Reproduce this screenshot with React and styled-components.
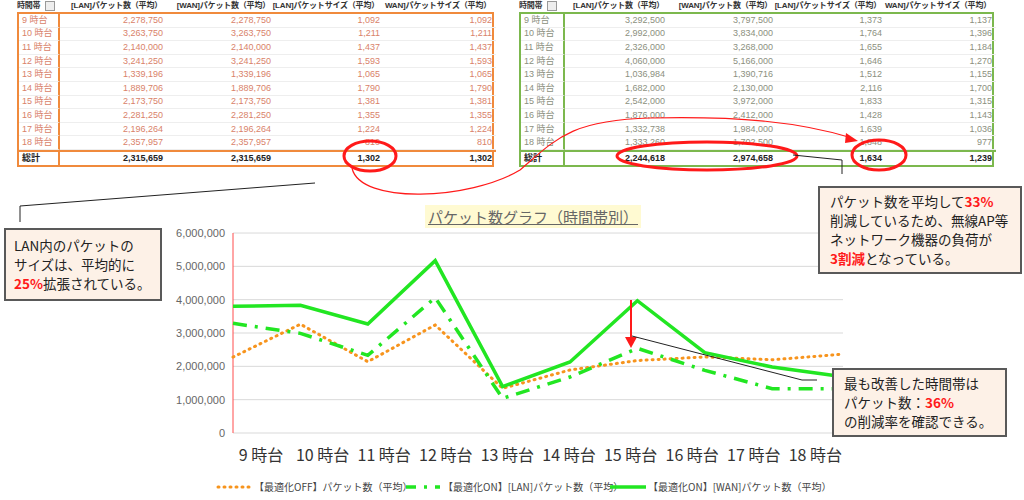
import React from "react";
import styled, { createGlobalStyle } from "styled-components";

const Global = createGlobalStyle`
  body { margin: 0; background: #fff; font-family: "Noto Sans CJK JP", "Liberation Sans", sans-serif; }
`;

const Page = styled.div`
  position: relative;
  width: 1024px;
  height: 500px;
  overflow: hidden;
  background: #fff;
`;

const TopRow = styled.div`
  display: flex;
  gap: 25px;
  padding-left: 17px;
`;

const Table = styled.div`
  display: grid;
  grid-template-columns: ${(p) => p.cols};
  width: ${(p) => p.width}px;
  font-family: "Liberation Sans", "Noto Sans CJK JP", sans-serif;
  font-size: 9px;
  line-height: 1;
`;

const Head = styled.div`
  height: 12px;
  display: flex;
  align-items: center;
  justify-content: ${(p) => (p.first ? "flex-start" : "flex-end")};
  font-weight: bold;
  font-size: 8px;
  letter-spacing: -0.2px;
  color: #333;
  white-space: nowrap;
  padding-right: 3px;
`;

const Body = styled.div`
  grid-column: 1 / -1;
  display: grid;
  grid-template-columns: ${(p) => p.cols};
  border: 2px solid ${(p) => p.color};
`;

const Cell = styled.div`
  height: 13.6px;
  display: flex;
  align-items: center;
  justify-content: ${(p) => (p.first ? "flex-start" : "flex-end")};
  padding: 0 4px 0 3px;
  color: ${(p) => p.text};
  border-bottom: 1px solid #eee;
  border-right: ${(p) => (p.first ? `2px solid ${p.color}` : "none")};
  box-sizing: border-box;
`;

const TotalCell = styled(Cell)`
  height: 15px;
  font-weight: bold;
  color: #222;
  border-bottom: none;
  border-top: 2px solid ${(p) => p.color};
`;

const Filter = styled.span`
  display: inline-block;
  width: 8px;
  height: 8px;
  margin-left: 5px;
  border: 1px solid #999;
  background: #eee;
`;

const Overlay = styled.svg`
  position: absolute;
  left: 0;
  top: 0;
  pointer-events: none;
`;

const Title = styled.div`
  position: absolute;
  left: 425px;
  top: 205px;
  padding: 1px 3px;
  background: #fffad2;
  color: #666;
  font-size: 15px;
  text-decoration: underline;
`;

const Callout = styled.div`
  position: absolute;
  left: ${(p) => p.x}px;
  top: ${(p) => p.y}px;
  width: ${(p) => p.w}px;
  box-sizing: border-box;
  background: #fdf1e7;
  border: 2px solid #595959;
  padding: ${(p) => p.pad};
  font-size: 13.5px;
  line-height: 19px;
  color: #222;
`;

const Red = styled.span`
  color: #ff1a1a;
  font-weight: bold;
`;

const left = {
  color: "#f08a3c",
  text: "#d9826a",
  cols: "41px 107px 108px 109px 112px",
  width: 477,
  rows: [
    ["2,278,750", "2,278,750", "1,092", "1,092"],
    ["3,263,750", "3,263,750", "1,211", "1,211"],
    ["2,140,000", "2,140,000", "1,437", "1,437"],
    ["3,241,250", "3,241,250", "1,593", "1,593"],
    ["1,339,196", "1,339,196", "1,065", "1,065"],
    ["1,889,706", "1,889,706", "1,790", "1,790"],
    ["2,173,750", "2,173,750", "1,381", "1,381"],
    ["2,281,250", "2,281,250", "1,355", "1,355"],
    ["2,196,264", "2,196,264", "1,224", "1,224"],
    ["2,357,957", "2,357,957", "810", "810"],
  ],
  total: ["2,315,659", "2,315,659", "1,302", "1,302"],
};

const right = {
  color: "#7cb84e",
  text: "#8c9080",
  cols: "44px 104px 108px 109px 110px",
  width: 475,
  rows: [
    ["3,292,500", "3,797,500", "1,373", "1,137"],
    ["2,992,000", "3,834,000", "1,764", "1,396"],
    ["2,326,000", "3,268,000", "1,655", "1,184"],
    ["4,060,000", "5,166,000", "1,646", "1,270"],
    ["1,036,984", "1,390,716", "1,512", "1,155"],
    ["1,682,000", "2,130,000", "2,116", "1,700"],
    ["2,542,000", "3,972,000", "1,833", "1,315"],
    ["1,876,000", "2,412,000", "1,428", "1,143"],
    ["1,332,738", "1,984,000", "1,639", "1,036"],
    ["1,333,260", "1,702,500", "1,848", "977"],
  ],
  total: ["2,244,618", "2,974,658", "1,634", "1,239"],
};

const heads = ["[LAN]パケット数（平均）", "[WAN]パケット数（平均）", "[LAN]パケットサイズ（平均）", "WAN]パケットサイズ（平均）"];

const DataTable = ({ d }) => (
  <Table cols={d.cols} width={d.width}>
    <Head first>時間帯<Filter /></Head>
    {heads.map((h) => (
      <Head key={h}>{h}</Head>
    ))}
    <Body cols={d.cols} color={d.color}>
      {d.rows.map((r, i) => (
        <React.Fragment key={i}>
          <Cell first color={d.color} text={d.text}>{9 + i} 時台</Cell>
          {r.map((v, j) => (
            <Cell key={j} color={d.color} text={d.text}>{v}</Cell>
          ))}
        </React.Fragment>
      ))}
      <TotalCell first color={d.color}>総計</TotalCell>
      {d.total.map((v, j) => (
        <TotalCell key={j} color={d.color}>{v}</TotalCell>
      ))}
    </Body>
  </Table>
);

const off = [2.279, 3.264, 2.14, 3.241, 1.339, 1.89, 2.174, 2.281, 2.196, 2.358];
const lanOn = [3.29, 2.99, 2.33, 4.06, 1.04, 1.68, 2.54, 1.88, 1.33, 1.33];
const wanOn = [3.8, 3.83, 3.27, 5.17, 1.39, 2.13, 3.97, 2.41, 1.98, 1.7];
const px = (i) => 233 + i * 67.4;
const py = (v) => 433 - v * 33.33;
const pts = (a) => a.map((v, i) => `${px(i)},${py(v)}`).join(" ");

const Chart = () => (
  <Overlay width="1024" height="500">
    {[0, 1, 2, 3, 4, 5, 6].map((k) => (
      <g key={k}>
        <line x1="233" x2="843" y1={py(k)} y2={py(k)} stroke="#d9d9d9" />
        <text x="225" y={py(k) + 4} textAnchor="end" fontSize="11" fill="#666" fontFamily="Liberation Sans, sans-serif">
          {k === 0 ? "0" : `${k},000,000`}
        </text>
      </g>
    ))}
    <line x1="233" x2="233" y1="233" y2="433" stroke="#ff4d4d" />
    {Array.from({ length: 10 }, (_, i) => (
      <text key={i} x={261 + i * 61.6} y="461" textAnchor="middle" fontSize="16" fill="#333" fontFamily="Noto Sans CJK JP, sans-serif">
        {9 + i} 時台
      </text>
    ))}
    <polyline points={pts(off)} fill="none" stroke="#f7941d" strokeWidth="3" strokeDasharray="1 5" strokeLinecap="round" />
    <polyline points={pts(lanOn)} fill="none" stroke="#22e622" strokeWidth="3.5" strokeDasharray="14 8 3 8" />
    <polyline points={pts(wanOn)} fill="none" stroke="#22e622" strokeWidth="3.5" />
    <line x1="631" y1="300" x2="631" y2="338" stroke="#ff1a1a" strokeWidth="2" />
    <polygon points="625,337 637,337 631,348" fill="#ff1a1a" />
    <polyline points="632,336 802,380 817,380" fill="none" stroke="#222" strokeWidth="1" />

    <ellipse cx="370" cy="156" rx="26" ry="15" fill="none" stroke="#ff1a1a" strokeWidth="3" />
    <ellipse cx="707" cy="156" rx="90" ry="14" fill="none" stroke="#ff1a1a" strokeWidth="3" />
    <ellipse cx="879" cy="155" rx="27" ry="15" fill="none" stroke="#ff1a1a" strokeWidth="3" />
    <path d="M352,168 C360,205 470,200 520,170 C555,140 570,120 650,118 C740,116 800,122 852,138" fill="none" stroke="#ff1a1a" strokeWidth="1.2" />
    <polygon points="846,133 858,141 845,143" fill="#ff1a1a" />
    <polyline points="20,222 20,206 315,183" fill="none" stroke="#222" strokeWidth="1" />
    <polyline points="793,155 842,160 842,174" fill="none" stroke="#222" strokeWidth="1" />

    <line x1="218" x2="250" y1="487" y2="487" stroke="#f7941d" strokeWidth="3" strokeDasharray="1 5" strokeLinecap="round" />
    <text x="254" y="491" fontSize="10" fill="#444" fontFamily="Noto Sans CJK JP, sans-serif">【最適化OFF】パケット数（平均）</text>
    <line x1="406" x2="440" y1="487" y2="487" stroke="#22e622" strokeWidth="3.5" strokeDasharray="10 8 3 8" />
    <text x="443" y="491" fontSize="10" fill="#444" fontFamily="Noto Sans CJK JP, sans-serif">【最適化ON】[LAN]パケット数（平均）</text>
    <line x1="610" x2="646" y1="487" y2="487" stroke="#22e622" strokeWidth="3.5" />
    <text x="648" y="491" fontSize="10" fill="#444" fontFamily="Noto Sans CJK JP, sans-serif">【最適化ON】[WAN]パケット数（平均）</text>
  </Overlay>
);

export default function App() {
  return (
    <Page>
      <Global />
      <TopRow>
        <DataTable d={left} />
        <DataTable d={right} />
      </TopRow>
      <Chart />
      <Title>パケット数グラフ（時間帯別）</Title>
      <Callout x={4} y={228} w={158} pad="6px 8px">
        LAN内のパケットの<br />サイズは、平均的に<br /><Red>25%</Red>拡張されている。
      </Callout>
      <Callout x={818} y={186} w={204} pad="4px 10px">
        パケット数を平均して<Red>33%</Red><br />削減しているため、無線AP等<br />ネットワーク機器の負荷が<br /><Red>3割減</Red>となっている。
      </Callout>
      <Callout x={832} y={368} w={175} pad="4px 10px">
        最も改善した時間帯は<br />パケット数：<Red>36%</Red><br />の削減率を確認できる。
      </Callout>
    </Page>
  );
}
